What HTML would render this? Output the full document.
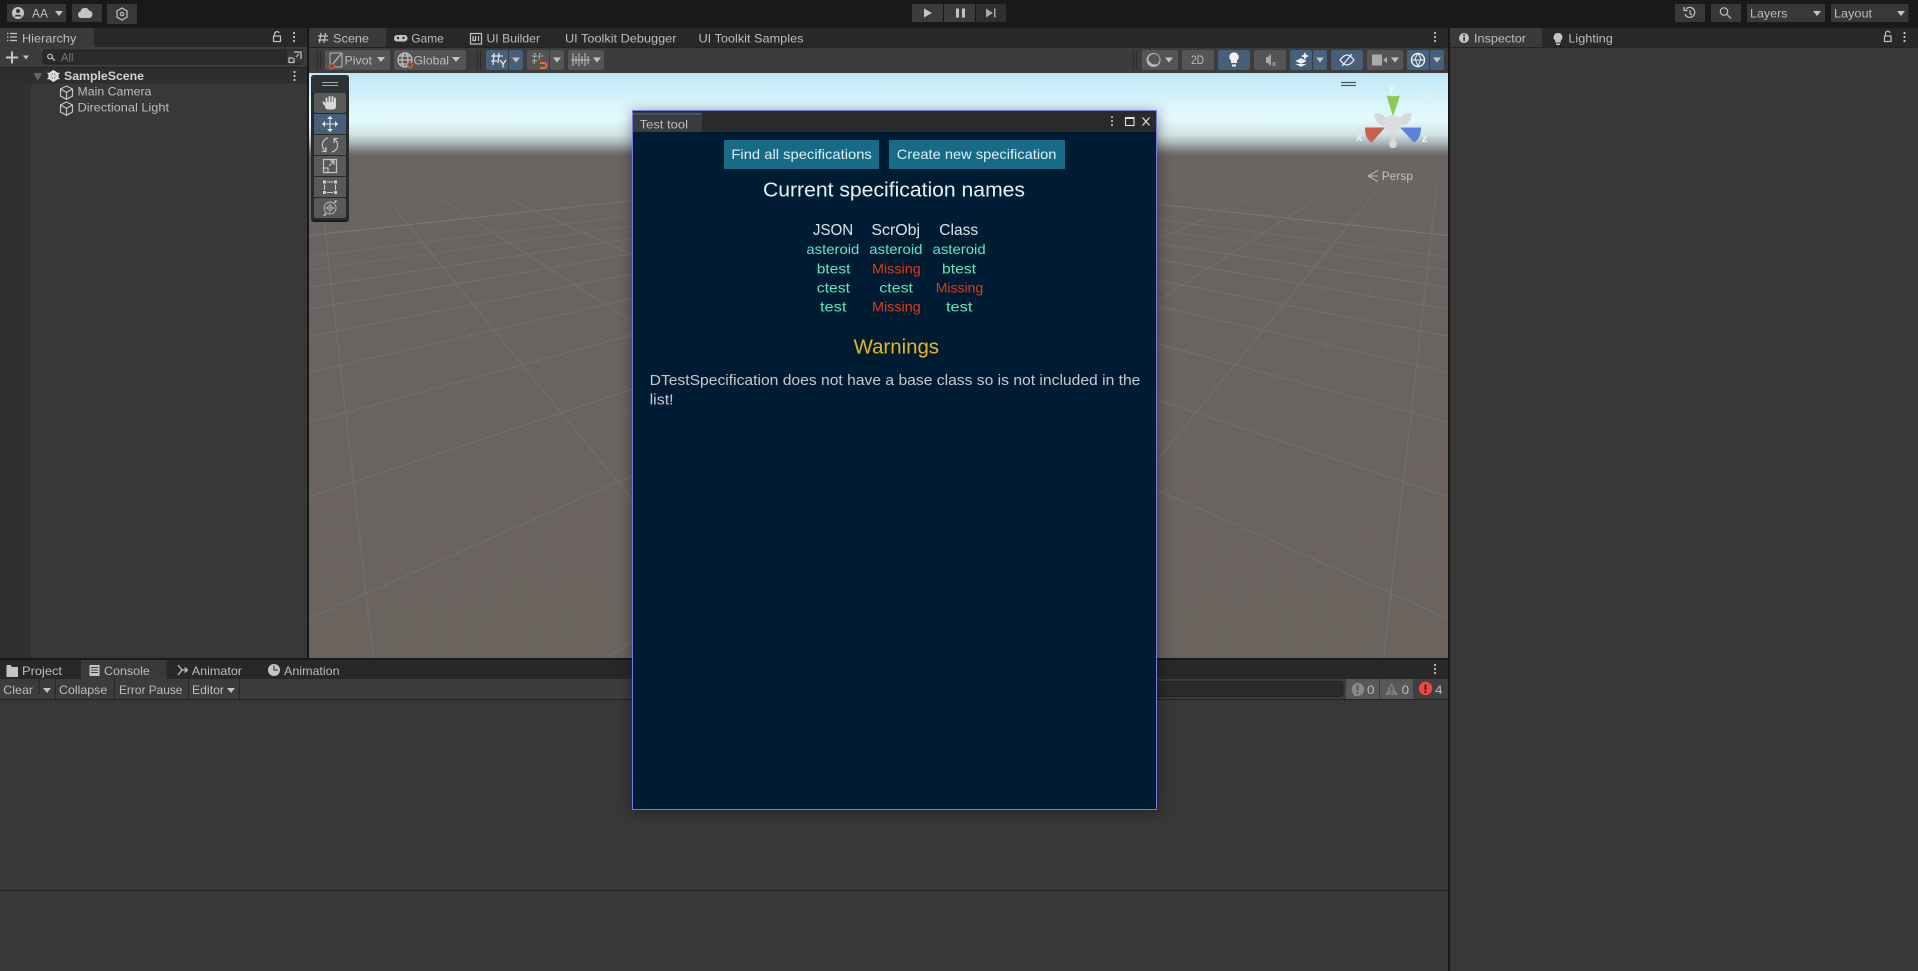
<!DOCTYPE html>
<html lang="en"><head><meta charset="utf-8"><title>Unity Editor - Test tool</title>
<style>
html,body{margin:0;padding:0;background:#383838;width:1918px;height:971px;overflow:hidden}
svg{display:block}
text{font-family:"Liberation Sans",sans-serif;font-size:12px;fill:#bdbdbd}
.g line{stroke:#76726e;stroke-width:1;vector-effect:non-scaling-stroke}
.f line{stroke:#767370;stroke-width:1;vector-effect:non-scaling-stroke;opacity:.14}
.i{fill:none;stroke:#c4c4c4;stroke-width:1.2}
.s{fill:#c4c4c4}
</style></head><body>
<svg width="1918" height="971" viewBox="0 0 1918 971" xmlns="http://www.w3.org/2000/svg">
<defs>
<linearGradient id="sky" x1="0" y1="73" x2="0" y2="658" gradientUnits="userSpaceOnUse">
<stop offset="0" stop-color="#bfe6f8"/><stop offset=".05" stop-color="#d8f4fb"/><stop offset=".08" stop-color="#e3fafc"/><stop offset=".105" stop-color="#d0e2e4"/><stop offset=".12" stop-color="#a8b4b6"/><stop offset=".13" stop-color="#85898a"/><stop offset=".14" stop-color="#6c6866"/><stop offset=".16" stop-color="#696462"/><stop offset="1" stop-color="#6a635e"/>
</linearGradient>
<linearGradient id="fade" x1="0" y1="152" x2="0" y2="222" gradientUnits="userSpaceOnUse">
<stop offset="0" stop-color="#6a6462" stop-opacity="1"/><stop offset=".25" stop-color="#6a6462" stop-opacity=".8"/><stop offset="1" stop-color="#6a6462" stop-opacity="0"/>
</linearGradient>
<clipPath id="vp"><rect x="309" y="156" width="1139" height="502"/></clipPath>
<filter id="blur" x="-20%" y="-20%" width="140%" height="140%"><feGaussianBlur stdDeviation="7"/></filter>
</defs>

<rect width="1918" height="971" fill="#383838"/>
<!-- top bar -->
<rect width="1918" height="28" fill="#191919"/>
<rect x="7" y="4" width="59" height="18" fill="#383838"/>
<circle cx="18" cy="13" r="6" fill="#c4c4c4"/><circle cx="18" cy="11" r="2" fill="#383838"/><path d="M14 16.500a4.500 3.500 0 0 1 8 0z" fill="#383838"/>
<text x="32" y="17.300" textLength="16" lengthAdjust="spacingAndGlyphs">AA</text>
<path d="M55 11h8l-4 5z" class="s"/>
<rect x="72" y="4" width="30" height="18" fill="#383838"/>
<path d="M81 18a3.300 3.300 0 0 1-.5-6.500a4.500 4.500 0 0 1 8.500-1a3.800 3.800 0 0 1 .5 7.500z" class="s"/>
<rect x="107" y="4" width="30" height="20" fill="#383838"/>
<path d="M122 8l5 3v6l-5 3l-5-3v-6z" class="i"/><circle cx="122" cy="14" r="1.700" class="i"/>
<rect x="912" y="4" width="31" height="18" fill="#3c3c3c"/><rect x="944" y="4" width="31" height="18" fill="#3c3c3c"/><rect x="976" y="4" width="30" height="18" fill="#2f2f2f"/>
<path d="M924 8.500l8 4.500l-8 4.500z" fill="#c4c4c4"/>
<rect x="956" y="8.500" width="3" height="9" fill="#c4c4c4"/><rect x="962" y="8.500" width="3" height="9" fill="#c4c4c4"/>
<path d="M986 8.500l7 4.500l-7 4.500z" fill="#aaa"/><rect x="994" y="8.500" width="1.500" height="9" fill="#aaa"/>
<rect x="1675" y="4" width="30" height="18" fill="#383838"/>
<path d="M1686 9a5 5 0 1 1-1 5M1690 10v3.500l2 1.500" class="i"/><path d="M1684 7v3.500h3.500" class="i"/>
<rect x="1711" y="4" width="30" height="18" fill="#383838"/>
<circle cx="1724" cy="11.500" r="3.700" class="i"/><path d="M1727 14.500l4 4" class="i"/>
<rect x="1747" y="4" width="78" height="18" fill="#383838"/>
<text x="1750" y="17.300" textLength="37.500" lengthAdjust="spacingAndGlyphs">Layers</text><path d="M1813 11h8l-4 5z" class="s"/>
<rect x="1831" y="4" width="77.500" height="18" fill="#383838"/>
<text x="1834" y="17.300" textLength="38" lengthAdjust="spacingAndGlyphs">Layout</text><path d="M1897 11h8l-4 5z" class="s"/>

<!-- hierarchy -->
<rect x="0" y="28" width="307" height="19" fill="#282828"/>
<rect x="0" y="28" width="94" height="19" fill="#3a3a3a"/>
<path d="M7 33.500h1.500M10 33.500h7M7 37h1.500M10 37h7M7 40.500h1.500M10 40.500h7" class="i" stroke-width="1"/>
<text x="22" y="42.700" textLength="54.300" lengthAdjust="spacingAndGlyphs">Hierarchy</text>
<rect x="273.500" y="36" width="7" height="5.500" class="i" stroke-width="1"/><path d="M274.500 36v-2a2.500 2.500 0 0 1 4.700-1" class="i" stroke-width="1"/>
<circle cx="294" cy="33" r="1.100" class="s"/><circle cx="294" cy="37" r="1.100" class="s"/><circle cx="294" cy="41" r="1.100" class="s"/>
<rect x="0" y="47" width="307" height="20" fill="#3c3c3c"/>
<rect x="0" y="67" width="307" height="1" fill="#232323"/>
<path d="M6 57.500h12M12 51.500v12" stroke="#c4c4c4" stroke-width="2" fill="none"/>
<path d="M23 55.500h6l-3 4z" class="s"/>
<rect x="43" y="50" width="260" height="14" rx="3" fill="#2a2a2a" stroke="#212121"/>
<circle cx="50" cy="56.500" r="2.300" class="i" stroke-width="1"/><path d="M52 58l3 2.500" class="i"/>
<text x="61" y="61.300" textLength="12.500" lengthAdjust="spacingAndGlyphs" style="fill:#777">All</text>
<rect x="287" y="50.500" width="16" height="13" fill="#383838"/>
<path d="M294 52h7v7M293 58h-4v4.500h5v-4.500" class="i" stroke-width="1"/><path d="M296 57l3-3" class="i" stroke-width="1"/>
<rect x="0" y="68" width="31" height="590" fill="#303030"/>
<rect x="0" y="68" width="307" height="15.500" fill="#2e2e2e"/>
<path d="M33.500 73h8.500l-4.200 8z" fill="#666"/>
<circle cx="53.500" cy="76" r="4" fill="none" stroke="#e4e4e4" stroke-width="2.400"/><path d="M53.500 70v12M47.500 73l12 6M59.500 73l-12 6" stroke="#e4e4e4" stroke-width="1.500"/>
<text x="64" y="80" textLength="80" lengthAdjust="spacingAndGlyphs" style="font-weight:bold;fill:#d2d2d2">SampleScene</text>
<circle cx="294.500" cy="72" r="1.100" class="s"/><circle cx="294.500" cy="76" r="1.100" class="s"/><circle cx="294.500" cy="80" r="1.100" class="s"/>
<g class="i" stroke-width=".9">
<path d="M66.500 86l6 3v7l-6 3.300l-6-3.300v-7zM60.500 89l6 3.300l6-3.300M66.500 92.300v7"/>
<path d="M66.500 102l6 3v7l-6 3.300l-6-3.300v-7zM60.500 105l6 3.300l6-3.300M66.500 108.300v7"/>
</g>
<text x="77.500" y="95.700" textLength="73.900" lengthAdjust="spacingAndGlyphs">Main Camera</text>
<text x="77.500" y="111.700" textLength="91.500" lengthAdjust="spacingAndGlyphs">Directional Light</text>
<rect x="307" y="28" width="2" height="632" fill="#191919"/>

<!-- scene tabs -->
<rect x="309" y="28" width="1139" height="19" fill="#282828"/>
<rect x="309" y="28" width="77" height="19" fill="#3a3a3a"/>
<path d="M321 33l-1.500 10M325.500 33l-1.500 10M318 36h10M318 40h10" class="i" stroke-width="1"/>
<text x="333" y="42.700" textLength="36" lengthAdjust="spacingAndGlyphs">Scene</text>
<rect x="394" y="35" width="13.500" height="6.500" rx="3.200" class="s"/><circle cx="398" cy="38" r="1.200" fill="#282828"/><circle cx="403.500" cy="38" r="1.200" fill="#282828"/>
<text x="411.400" y="42.700" textLength="32.300" lengthAdjust="spacingAndGlyphs">Game</text>
<rect x="470.500" y="33.500" width="11" height="10.500" class="i" stroke-width="1"/><path d="M473 36v4.500h2.500V36M478.500 36v5" class="i" stroke-width="1"/>
<text x="486.500" y="42.700" textLength="53.500" lengthAdjust="spacingAndGlyphs">UI Builder</text>
<text x="565" y="42.700" textLength="111.500" lengthAdjust="spacingAndGlyphs">UI Toolkit Debugger</text>
<text x="698.500" y="42.700" textLength="105" lengthAdjust="spacingAndGlyphs">UI Toolkit Samples</text>
<circle cx="1435" cy="33" r="1.100" class="s"/><circle cx="1435" cy="37" r="1.100" class="s"/><circle cx="1435" cy="41" r="1.100" class="s"/>

<!-- scene toolbar -->
<rect x="309" y="47" width="1139" height="26" fill="#3c3c3c"/>
<rect x="309" y="47" width="1139" height="1" fill="#232323"/>
<path d="M317.500 51v18M320.500 51v18M477.500 51v18M480.500 51v18M1133.500 51v18M1136.500 51v18" stroke="#2a2a2a" fill="none"/>
<g fill="#555">
<rect x="325" y="50" width="65" height="20" rx="2"/><rect x="394" y="50" width="72" height="20" rx="2"/>
<rect x="527" y="50" width="22" height="20" rx="2"/><rect x="550" y="50" width="14" height="20" rx="2"/>
<rect x="568" y="50" width="36" height="20" rx="2"/>
<rect x="1142" y="50" width="36" height="20" rx="2"/><rect x="1182" y="50" width="32" height="20" rx="2"/>
<rect x="1254" y="50" width="32" height="20" rx="2"/><rect x="1367" y="50" width="36" height="20" rx="2"/>
</g>
<g fill="#46607c">
<rect x="486" y="50" width="22" height="20" rx="2"/><rect x="509" y="50" width="14" height="20" rx="2"/>
<rect x="1218" y="50" width="32" height="20" rx="2"/>
<rect x="1290" y="50" width="22" height="20" rx="2"/><rect x="1313" y="50" width="14" height="20" rx="2"/>
<rect x="1331" y="50" width="32" height="20" rx="2"/>
<rect x="1407" y="50" width="22" height="20" rx="2"/><rect x="1430" y="50" width="14" height="20" rx="2"/>
</g>
<rect x="330" y="53" width="12" height="14" fill="none" stroke="#bbb" stroke-width="1"/>
<path d="M331 66l10-12" stroke="#ccc" fill="none"/><circle cx="332" cy="66" r="2.500" fill="#555" stroke="#e8562c" stroke-width="1.300"/>
<text x="344.500" y="64.300" textLength="27.500" lengthAdjust="spacingAndGlyphs">Pivot</text><path d="M377 57h8l-4 5z" class="s"/>
<circle cx="405" cy="60" r="7" class="i" stroke-width=".9"/><ellipse cx="405" cy="60" rx="3" ry="7" class="i" stroke-width=".9"/><path d="M398 60h14M399.500 56h11M399.500 64h11" class="i" stroke-width=".9"/>
<circle cx="410" cy="65" r="2.500" fill="#555" stroke="#e8562c" stroke-width="1.300"/>
<text x="413.500" y="64.300" textLength="35.500" lengthAdjust="spacingAndGlyphs">Global</text><path d="M452 57h8l-4 5z" class="s"/>
<path d="M494 53l-1 12M499 53l-1 10M491 56h12M491 61h6M500 60l3 4l3-4M503 64v3.500" stroke="#e6e6e6" stroke-width="1.300" fill="none"/>
<path d="M512 57.500h8l-4 5z" class="s"/>
<path d="M535 53l-1 12M540 53l-1 7M532 56h11M532 61h5" stroke="#c4c4c4" fill="none" stroke-dasharray="2 1"/>
<path d="M540 63h4a2.500 2.500 0 0 1 0 5h-4" stroke="#f06a30" stroke-width="2" fill="none"/>
<path d="M553 57.500h8l-4 5z" class="s"/>
<path d="M573 53v13M576 56v8M579 53v13M582 56v8M585 53v13M588 56v8M571 60h19" stroke="#c4c4c4" fill="none"/>
<path d="M593 57.500h8l-4 5z" class="s"/>
<circle cx="1153.500" cy="60" r="7" fill="#b8b8b8"/><circle cx="1154" cy="59.500" r="5.500" fill="#555"/><path d="M1148 60a5.500 5.500 0 0 0 9 4a6 6 0 0 1-6-1z" fill="#b8b8b8"/>
<path d="M1165 57.500h8l-4 5z" class="s"/>
<text x="1191" y="64" textLength="13" lengthAdjust="spacingAndGlyphs">2D</text>
<path d="M1234 52.500a4.500 4.500 0 0 1 3 8v2.500h-6v-2.500a4.500 4.500 0 0 1 3-8zM1232 64.500h4v2h-4z" fill="#f2f2f2"/>
<path d="M1266 57h2l3-3v12l-3-3h-2z" fill="#aaa"/><path d="M1272.500 62l3 4M1275.500 62l-3 4" stroke="#aaa" fill="none"/>
<path d="M1296 61l5-2.500l5 2.500l-5 2.500zM1296 64l5 2.500l5-2.500" fill="#f0f0f0" stroke="#f0f0f0" stroke-width=".6"/><path d="M1305 52l1.200 2.800l2.800 1.200l-2.800 1.200l-1.200 2.800l-1.200-2.800l-2.800-1.200l2.800-1.200z" fill="#f0f0f0"/>
<path d="M1316 57.500h8l-4 5z" class="s"/>
<path d="M1340 60c3-4 5-5 7-5s4 1 7 5c-3 4-5 5-7 5s-4-1-7-5z" fill="none" stroke="#f0f0f0" stroke-width="1.200"/><path d="M1342 66l10-12" stroke="#f0f0f0" stroke-width="1.200"/>
<rect x="1372" y="54.500" width="10" height="11" fill="#aaa"/><path d="M1383 60l4-3v6z" fill="#aaa"/>
<path d="M1391 57.500h8l-4 5z" class="s"/>
<circle cx="1418" cy="60" r="6.500" fill="none" stroke="#f0f0f0" stroke-width="1.400"/><path d="M1411.500 60h13M1418 53.500l-3 5l3 8l3-8z" fill="none" stroke="#f0f0f0"/>
<path d="M1433 57.500h8l-4 5z" class="s"/>

<!-- viewport -->
<rect x="309" y="73" width="1139" height="585" fill="url(#sky)"/>
<g clip-path="url(#vp)">
<g id="grid">
<g transform="translate(309,130) scale(.33333,.33807)">
<g class="f">
<line x1="0" y1="280" x2="975" y2="185"/><line x1="0" y1="255" x2="975" y2="165"/><line x1="0" y1="232" x2="975" y2="150"/><line x1="0" y1="210" x2="975" y2="135"/><line x1="0" y1="190" x2="975" y2="122"/>
<line x1="80" y1="40" x2="250" y2="1560"/><line x1="100" y1="40" x2="330" y2="1560"/><line x1="115" y1="40" x2="410" y2="1560"/><line x1="130" y1="40" x2="500" y2="1560"/><line x1="135" y1="40" x2="590" y2="1560"/><line x1="140" y1="40" x2="700" y2="1560"/><line x1="150" y1="40" x2="830" y2="1560"/>
<line x1="0" y1="1360" x2="975" y2="940"/><line x1="0" y1="1270" x2="975" y2="880"/><line x1="0" y1="1190" x2="975" y2="820"/>
</g>
<g class="g">
<line x1="0" y1="1445" x2="975" y2="1020"/><line x1="0" y1="1085" x2="975" y2="765"/><line x1="0" y1="865" x2="975" y2="605"/><line x1="0" y1="717" x2="975" y2="497"/><line x1="0" y1="610" x2="975" y2="425"/><line x1="0" y1="530" x2="975" y2="365"/><line x1="0" y1="465" x2="975" y2="320"/><line x1="0" y1="415" x2="975" y2="283" opacity=".7"/><line x1="0" y1="375" x2="975" y2="252" opacity=".7"/>
<line x1="0" y1="312" x2="975" y2="208" style="stroke:#7d7a76"/>
<line x1="895" y1="1560" x2="975" y2="1510"/>
<line x1="15" y1="0" x2="193" y2="1565"/>
<line x1="140" y1="90" x2="975" y2="1100"/>
<line x1="150" y1="50" x2="975" y2="570"/>
<line x1="200" y1="30" x2="975" y2="370"/>
</g>
</g>
</g>
<use href="#grid" transform="translate(1757,0) scale(-1,1)"/>
<rect x="309" y="152" width="1139" height="70" fill="url(#fade)"/>
</g>

<!-- tools overlay -->
<rect x="311" y="75" width="38" height="147" rx="3" fill="#1b1b1b"/>
<rect x="311" y="75" width="38" height="18" rx="3" fill="#2d3335"/>
<rect x="311" y="93" width="38" height="127" fill="#2a2a2a"/>
<path d="M322 82.500h16M322 85.500h16" stroke="#aaa" fill="none"/>
<g fill="#595959"><rect x="314" y="93" width="32" height="20" rx="2"/><rect x="314" y="135" width="32" height="20"/><rect x="314" y="156" width="32" height="20"/><rect x="314" y="177" width="32" height="20"/><rect x="314" y="198" width="32" height="20" rx="2"/></g>
<rect x="314" y="114" width="32" height="20" fill="#46607c"/>
<rect x="325" y="102" width="11" height="7.500" rx="3" fill="#d8d8d8"/>
<path d="M326.500 98.500v5M329.500 97v6M332.500 97v6M335 98.500v5M323.500 102.500l2.500 3.500" stroke="#d8d8d8" stroke-width="2" stroke-linecap="round" fill="none"/>
<path d="M330 116l3 3h-6zM330 132l-3-3h6zM322 124l3-3v6zM338 124l-3-3v6z" fill="#e8e8e8"/><path d="M330 119v10M325 124h10" stroke="#e8e8e8" fill="none"/>
<path d="M328 138a7 7 0 0 0-2 13M332 152a7 7 0 0 0 2-13M326 147v4.500h-4M334 143v-4.500h4" class="i" stroke-width="1"/>
<rect x="323.500" y="159.500" width="13" height="13" class="i" stroke-width="1"/><rect x="323.500" y="168" width="4.500" height="4.500" class="i" stroke-width="1"/><path d="M329 166l5-5M330 161h4v4" class="i" stroke-width="1"/>
<g fill="#d0d0d0"><rect x="323" y="180.500" width="3" height="3"/><rect x="334" y="180.500" width="3" height="3"/><rect x="323" y="191" width="3" height="3"/><rect x="334" y="191" width="3" height="3"/></g>
<path d="M327 182h6M327 192.500h6M324.500 184.500v5.500M335.500 184.500v5.500" stroke="#d0d0d0" fill="none"/>
<circle cx="330" cy="208" r="6" fill="none" stroke="#bbb" stroke-width=".9"/><path d="M325 208h10M330 203v10" stroke="#bbb" stroke-width=".8" fill="none"/><circle cx="330" cy="208" r="2.500" fill="none" stroke="#bbb" stroke-width=".8"/><path d="M323 215.500l3-3v3zM337.500 200.500l-3 3v-3z" fill="#d0d0d0"/>

<!-- gizmo -->
<path d="M1341 82.500h15M1341 85.500h15" stroke="#555" stroke-width="1.200" fill="none"/>
<text x="1388.500" y="91" style="fill:#f4f8f8;font-size:12px;font-weight:bold;opacity:.9">y</text>
<path d="M1422 92.500h6v6h-6zM1423 92v-1.500a2 2 0 0 1 4 0" fill="#e3eff2" opacity=".6"/>
<path d="M1386.500 95.500q6.500 1.600 13.500 0l-7 21.500z" fill="#8ecb55"/>
<path d="M1365 127.500h20l-13.300 15q-7-4-6.700-15z" fill="#c8604f"/>
<path d="M1400 127.500h21q0 11-7 15z" fill="#5c82dc"/>
<path d="M1374 114q6-3 11 3l3 5l-5 4q-8-3-9-12zM1412 114q-6-3-11 3l-3 5l5 4q8-3 9-12zM1393 130q-1 8-4 13q0 5 4 5t4-5q-3-5-4-13z" fill="#d8d8d8"/>
<path d="M1385 118l8-3.500l8 3.500v10l-8 7l-8-7z" fill="#dcdcdc"/>
<text x="1356" y="141" style="fill:#eee;font-size:12px;font-weight:bold">x</text>
<text x="1421.500" y="142" style="fill:#eee;font-size:12px;font-weight:bold">z</text>
<path d="M1378 170.500l-10 5.500l10 5.500M1368 176h10" fill="none" stroke="#b8b8b8"/>
<text x="1381.700" y="180" textLength="31.300" lengthAdjust="spacingAndGlyphs" style="fill:#c0c0c0">Persp</text>

<!-- inspector -->
<rect x="1448" y="28" width="2" height="943" fill="#191919"/>
<rect x="1450" y="28" width="468" height="19" fill="#282828"/>
<rect x="1450" y="28" width="92" height="19" fill="#3a3a3a"/>
<circle cx="1464" cy="38" r="5" class="s"/><rect x="1463.200" y="37" width="1.800" height="4" fill="#3c3c3c"/><rect x="1463.200" y="34.300" width="1.800" height="1.700" fill="#3c3c3c"/>
<text x="1474" y="42.700" textLength="52" lengthAdjust="spacingAndGlyphs">Inspector</text>
<path d="M1558 33a4.200 4.200 0 0 1 2.800 7.500v2h-5.600v-2a4.200 4.200 0 0 1 2.800-7.500zM1556 43.500h4v1.500h-4z" class="s"/>
<text x="1568.400" y="42.700" textLength="44.400" lengthAdjust="spacingAndGlyphs">Lighting</text>
<rect x="1884.500" y="36" width="6.500" height="5.500" class="i" stroke-width="1"/><path d="M1885.500 36v-2a2.300 2.300 0 0 1 4.500-1" class="i" stroke-width="1"/>
<circle cx="1904.500" cy="33" r="1.100" class="s"/><circle cx="1904.500" cy="37" r="1.100" class="s"/><circle cx="1904.500" cy="41" r="1.100" class="s"/>
<rect x="1450" y="47" width="468" height="1" fill="#232323"/>

<!-- bottom panel -->
<rect x="0" y="658" width="1448" height="2" fill="#191919"/>
<rect x="0" y="660" width="1448" height="19" fill="#282828"/>
<rect x="81" y="660" width="85.500" height="19" fill="#3a3a3a"/>
<path d="M6.500 665h4l1.500 2h6v10h-11.500z" class="s"/>
<text x="22" y="675" textLength="40" lengthAdjust="spacingAndGlyphs">Project</text>
<path d="M89.500 665h10v11h-10z" class="s"/><path d="M91 667.500h7M91 670h7M91 672.500h7" stroke="#3c3c3c" fill="none"/>
<text x="104" y="675" textLength="45.800" lengthAdjust="spacingAndGlyphs">Console</text>
<path d="M178 665l4 5h5M178 675l4-5M184.500 667.500l3 2.500l-3 2.500" class="i" stroke-width="1"/>
<text x="191.800" y="675" textLength="50.200" lengthAdjust="spacingAndGlyphs">Animator</text>
<circle cx="274" cy="670" r="6" class="s"/><path d="M274 665.500v4.500h4" stroke="#282828" fill="none"/>
<text x="284" y="675" textLength="55.600" lengthAdjust="spacingAndGlyphs">Animation</text>
<circle cx="1435" cy="665" r="1.100" class="s"/><circle cx="1435" cy="669" r="1.100" class="s"/><circle cx="1435" cy="673" r="1.100" class="s"/>
<rect x="0" y="679" width="1448" height="20" fill="#3c3c3c"/>
<rect x="0" y="699" width="1448" height="1" fill="#232323"/>
<text x="3.300" y="694" textLength="29.700" lengthAdjust="spacingAndGlyphs">Clear</text>
<path d="M39 680v14M55.500 679v20M114.500 679v20M188.500 679v20M239.500 679v20" stroke="#262626" fill="none"/>
<path d="M43 688h8l-4 5z" class="s"/>
<text x="59" y="694" textLength="48.300" lengthAdjust="spacingAndGlyphs">Collapse</text>
<text x="119" y="694" textLength="63.400" lengthAdjust="spacingAndGlyphs">Error Pause</text>
<text x="192" y="694" textLength="32" lengthAdjust="spacingAndGlyphs">Editor</text>
<path d="M227 688h8l-4 5z" class="s"/>
<rect x="1100" y="681.500" width="243" height="15" rx="3" fill="#2a2a2a" stroke="#212121"/>
<rect x="1346" y="679" width="33" height="20" fill="#585858"/><rect x="1380" y="679" width="33" height="20" fill="#585858"/><rect x="1414" y="679" width="34" height="20" fill="#3f3f3f"/>
<path d="M1357.500 683a6.500 6.500 0 1 1-1 12.900l-2.500.8l.3-2a6.500 6.500 0 0 1 3.200-11.700z" fill="#8a8a8a"/><rect x="1356.500" y="685" width="2" height="5.500" fill="#585858"/><rect x="1356.500" y="692" width="2" height="2" fill="#585858"/>
<text x="1367" y="694" textLength="7.500" lengthAdjust="spacingAndGlyphs">0</text>
<path d="M1391.500 682.500l6.500 12.500h-13z" fill="#7d7d7d"/><rect x="1390.600" y="686.500" width="1.800" height="4.500" fill="#585858"/><rect x="1390.600" y="692" width="1.800" height="1.800" fill="#585858"/>
<text x="1401.700" y="694" textLength="7.500" lengthAdjust="spacingAndGlyphs">0</text>
<circle cx="1425.500" cy="688.500" r="6.700" fill="#f04840"/><rect x="1424.500" y="684.500" width="2" height="5.500" fill="#3c2020"/><rect x="1424.500" y="691" width="2" height="2" fill="#3c2020"/>
<text x="1435" y="694" textLength="7.500" lengthAdjust="spacingAndGlyphs">4</text>
<rect x="0" y="890" width="1448" height="1" fill="#232323"/>

<!-- floating window -->
<rect x="632" y="112" width="526" height="700" fill="#000" opacity=".4" filter="url(#blur)"/>
<rect x="632" y="110" width="525" height="700" fill="#7a7ade"/>
<rect x="633" y="111" width="523" height="698" fill="#001c33"/>
<rect x="633" y="111" width="523" height="21" fill="#2a2a2a"/>
<rect x="633" y="112.500" width="69" height="19.500" fill="#3c3c3c"/>
<rect x="633" y="113" width="69" height="1.500" fill="#2f5f8a"/>
<text x="639.600" y="128.300" textLength="48.400" lengthAdjust="spacingAndGlyphs">Test tool</text>
<circle cx="1112" cy="117" r="1" fill="#ccc"/><circle cx="1112" cy="121" r="1" fill="#ccc"/><circle cx="1112" cy="125" r="1" fill="#ccc"/>
<rect x="1125.500" y="117.500" width="8.500" height="8" fill="none" stroke="#ddd" stroke-width="1.100"/><rect x="1125.500" y="117" width="8.500" height="2" fill="#ddd"/>
<path d="M1142.500 117.500l7 8M1149.500 117.500l-7 8" stroke="#ddd" stroke-width="1.200" fill="none"/>
<rect x="724" y="140" width="155" height="29" fill="#186a88"/>
<rect x="889" y="140" width="176" height="29" fill="#186a88"/>
<text x="731.400" y="159" textLength="140.400" lengthAdjust="spacingAndGlyphs" style="fill:#dff0f4;font-size:14px">Find all specifications</text>
<text x="896.800" y="159" textLength="159.600" lengthAdjust="spacingAndGlyphs" style="fill:#dff0f4;font-size:14px">Create new specification</text>
<text x="763" y="196.700" textLength="262" lengthAdjust="spacingAndGlyphs" style="font-size:20px;fill:#e6f2f4">Current specification names</text>
<text x="812.900" y="235" textLength="40.300" lengthAdjust="spacingAndGlyphs" style="font-size:16px;fill:#d8e6ea">JSON</text>
<text x="871.400" y="235" textLength="48.600" lengthAdjust="spacingAndGlyphs" style="font-size:16px;fill:#d8e6ea">ScrObj</text>
<text x="939.300" y="235" textLength="38.900" lengthAdjust="spacingAndGlyphs" style="font-size:16px;fill:#d8e6ea">Class</text>
<text x="806.400" y="254" textLength="52.900" lengthAdjust="spacingAndGlyphs" style="font-size:14px;fill:#5ce8c0">asteroid</text>
<text x="869.300" y="254" textLength="53.200" lengthAdjust="spacingAndGlyphs" style="font-size:14px;fill:#5ce8c0">asteroid</text>
<text x="932.500" y="254" textLength="53.200" lengthAdjust="spacingAndGlyphs" style="font-size:14px;fill:#5ce8c0">asteroid</text>
<text x="816.800" y="273.300" textLength="33.600" lengthAdjust="spacingAndGlyphs" style="font-size:14px;fill:#5ce8c0">btest</text>
<text x="872" y="273.300" textLength="48.700" lengthAdjust="spacingAndGlyphs" style="font-size:14px;fill:#e03a10">Missing</text>
<text x="942" y="273.300" textLength="34" lengthAdjust="spacingAndGlyphs" style="font-size:14px;fill:#5ce8c0">btest</text>
<text x="816.800" y="292.300" textLength="33.200" lengthAdjust="spacingAndGlyphs" style="font-size:14px;fill:#5ce8c0">ctest</text>
<text x="879.300" y="292.300" textLength="33.700" lengthAdjust="spacingAndGlyphs" style="font-size:14px;fill:#5ce8c0">ctest</text>
<text x="935.700" y="292.300" textLength="47.500" lengthAdjust="spacingAndGlyphs" style="font-size:14px;fill:#e03a10">Missing</text>
<text x="820" y="311.300" textLength="26.400" lengthAdjust="spacingAndGlyphs" style="font-size:14px;fill:#5ce8c0">test</text>
<text x="872" y="311.300" textLength="48.700" lengthAdjust="spacingAndGlyphs" style="font-size:14px;fill:#e03a10">Missing</text>
<text x="946" y="311.300" textLength="26.400" lengthAdjust="spacingAndGlyphs" style="font-size:14px;fill:#5ce8c0">test</text>
<text x="853.600" y="353.300" textLength="85.400" lengthAdjust="spacingAndGlyphs" style="font-size:20px;fill:#e8b422">Warnings</text>
<text x="649.600" y="385" textLength="490.800" lengthAdjust="spacingAndGlyphs" style="font-size:15px;fill:#c6c8cc">DTestSpecification does not have a base class so is not included in the</text>
<text x="649.600" y="404.300" textLength="24" lengthAdjust="spacingAndGlyphs" style="font-size:15px;fill:#c6c8cc">list!</text>
</svg>
</body></html>
